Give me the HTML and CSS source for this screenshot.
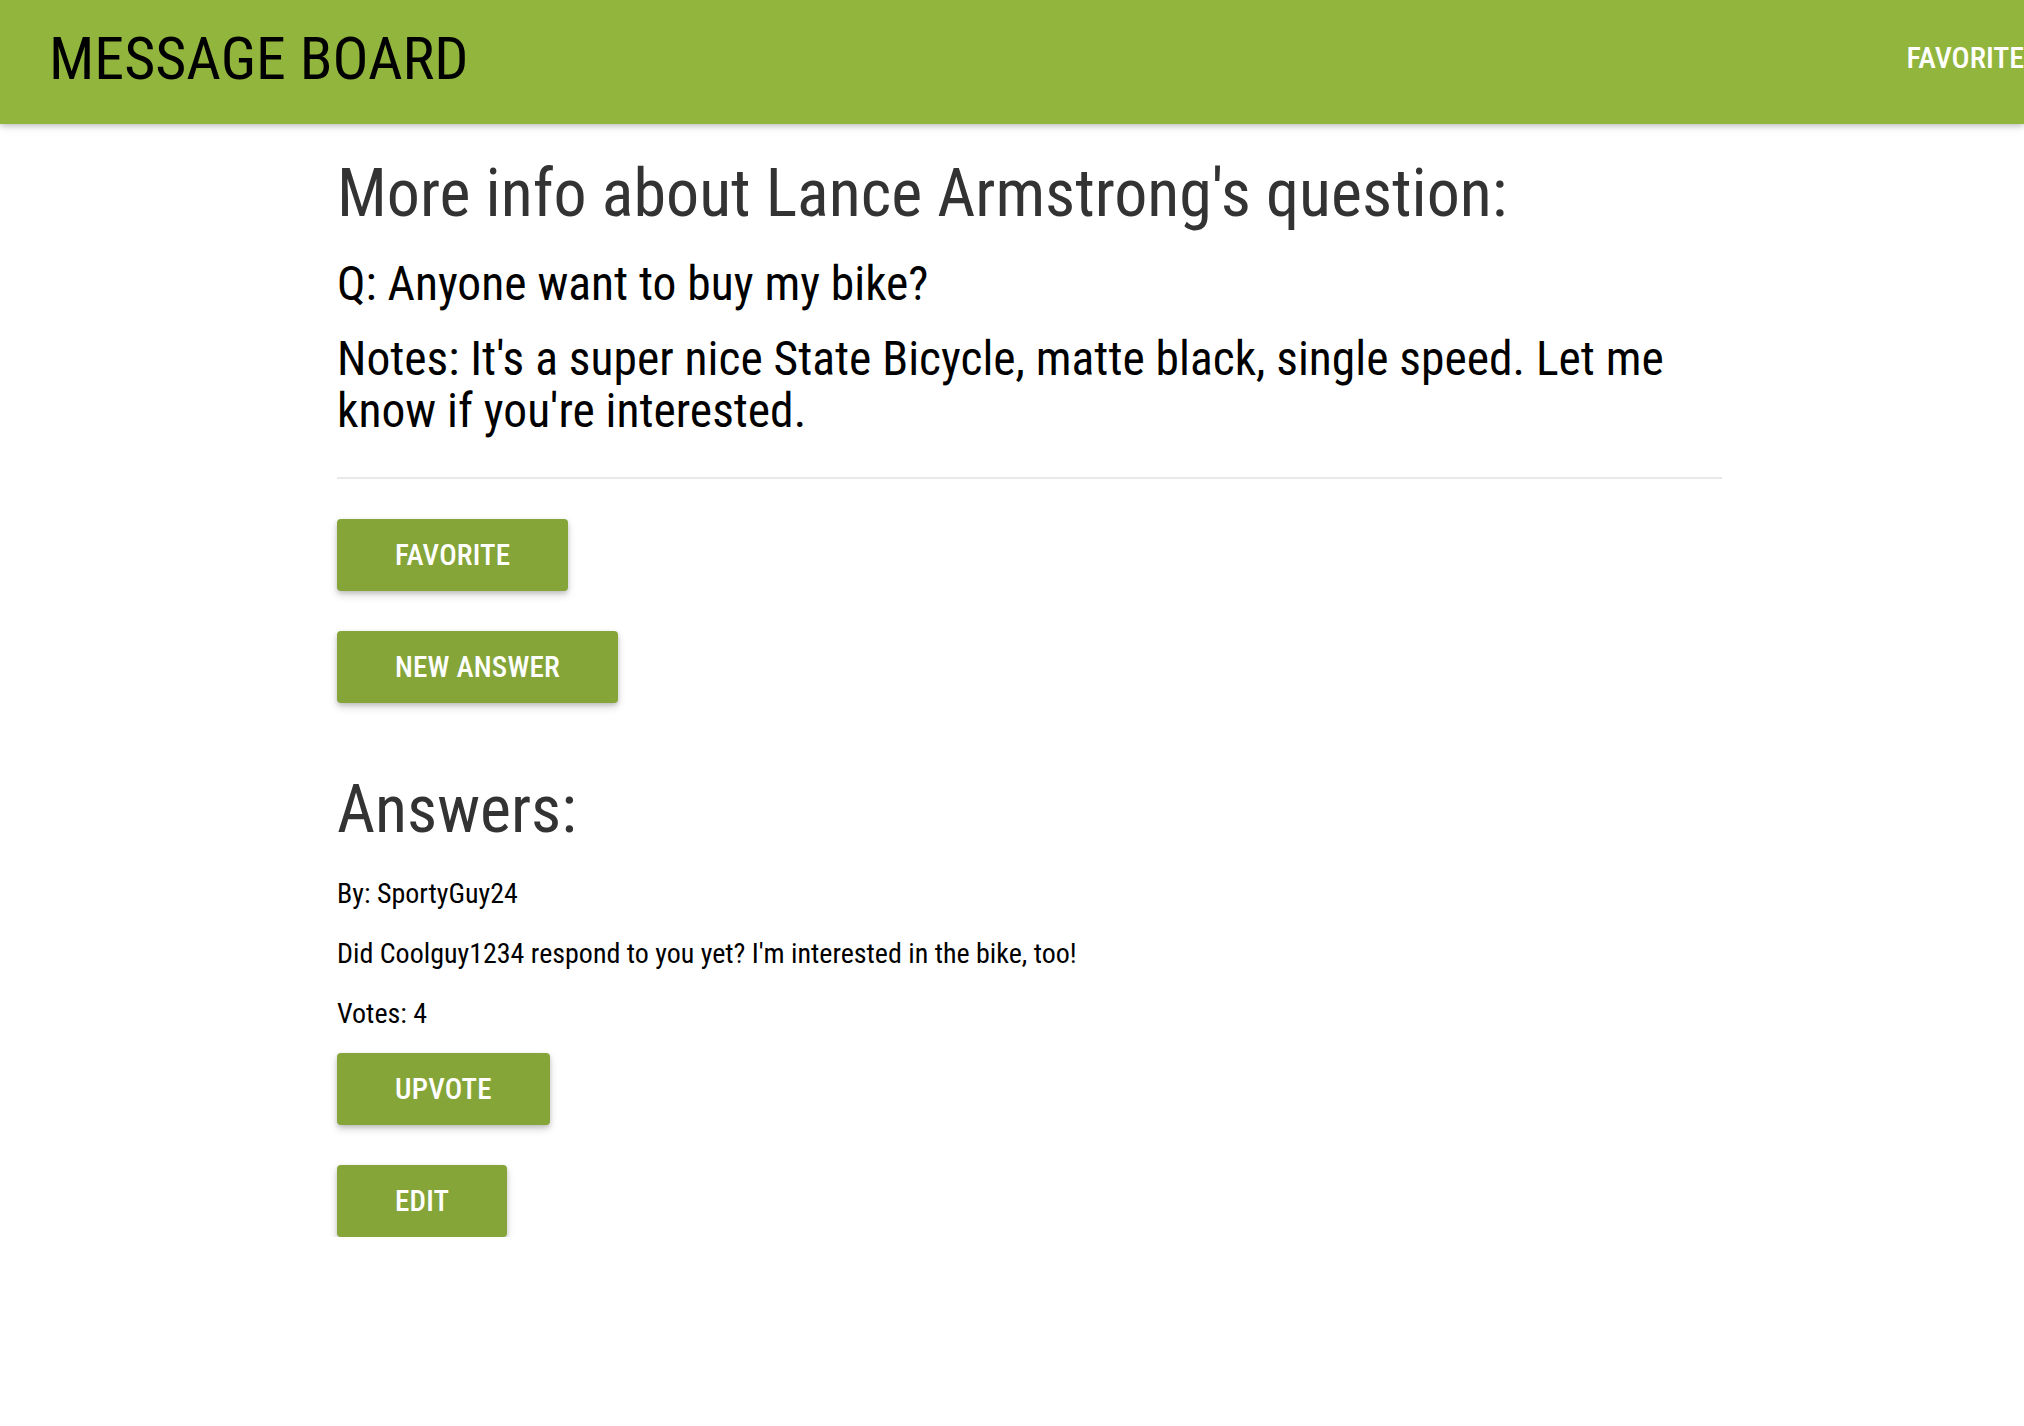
FILE: index.html
```html
<!DOCTYPE html>
<html lang="en">
<head>
<meta charset="utf-8">
<title>Message Board</title>
<link rel="stylesheet" href="styles.css">
</head>
<body>
<header class="topbar">
  <a class="brand" href="#">MESSAGE BOARD</a>
  <nav class="nav-links">
    <a class="nav-link" href="#">FAVORITES</a>
  </nav>
</header>
<main class="container">
  <h1 class="page-title">More info about Lance Armstrong's question:</h1>
  <h2 class="question">Q: Anyone want to buy my bike?</h2>
  <h2 class="notes">Notes: It's a super nice State Bicycle, matte black, single speed. Let me know if you're interested.</h2>
  <hr class="divider">
  <div class="actions">
    <button class="btn">FAVORITE</button>
    <button class="btn">NEW ANSWER</button>
  </div>
  <h1 class="answers-title">Answers:</h1>
  <section class="answer">
    <p class="answer-line">By: SportyGuy24</p>
    <p class="answer-line">Did Coolguy1234 respond to you yet? I'm interested in the bike, too!</p>
    <p class="answer-line">Votes: 4</p>
    <div class="actions actions-answer">
      <button class="btn">UPVOTE</button>
      <button class="btn">EDIT</button>
    </div>
  </section>
</main>
</body>
</html>
```
FILE: styles.css
```css
html, body {
  margin: 0;
  padding: 0;
  background: #ffffff;
  overflow-x: hidden;
}

body {
  font-family: "Roboto Condensed", "Liberation Sans Narrow", "Roboto", "Liberation Sans", sans-serif;
  color: #000;
}

.topbar {
  height: 124px;
  background: #92b53d;
  display: flex;
  align-items: flex-start;
  overflow: hidden;
  box-shadow: 0 2px 5px rgba(0, 0, 0, 0.16), 0 2px 10px rgba(0, 0, 0, 0.12);
  position: relative;
  z-index: 1;
}

.brand {
  padding-left: 49px;
  font-size: 60px;
  line-height: 117px;
  color: #000;
  text-decoration: none;
  white-space: nowrap;
}

.nav-links {
  margin-left: auto;
  margin-right: -46px;
  display: flex;
}

.nav-link {
  display: block;
  font-size: 30px;
  font-weight: 500;
  line-height: 116px;
  color: #fff;
  text-decoration: none;
  padding: 0 30px;
  white-space: nowrap;
}

.container {
  width: 1420px;
  margin: 0 auto;
  padding-left: 35px;
  box-sizing: border-box;
}

.page-title,
.answers-title {
  font-size: 66px;
  font-weight: 400;
  line-height: 1.1;
  color: #333;
  margin: 0;
}

.page-title {
  margin-top: 34px;
}

.question,
.notes {
  font-size: 47.5px;
  font-weight: 400;
  line-height: 1.1;
  color: #000;
  margin: 0;
}

.question {
  margin-top: 27px;
}

.notes {
  margin-top: 23px;
}

.divider {
  border: 0;
  border-top: 2px solid #e9e9e9;
  margin: 40px 0 40px;
  height: 0;
}

.actions {
  display: flex;
  flex-direction: column;
  align-items: flex-start;
  gap: 40px;
}

.btn {
  height: 72px;
  padding: 0 58px;
  border: 0;
  border-radius: 4px;
  background: #85a538;
  color: #fff;
  font-family: inherit;
  font-size: 29px;
  font-weight: 500;
  letter-spacing: 0.2px;
  box-shadow: 0 4px 8px rgba(0, 0, 0, 0.16), 0 2px 4px rgba(0, 0, 0, 0.14);
  cursor: pointer;
}

.answers-title {
  margin-top: 71px;
}

.answer {
  margin-top: 26px;
}

.answer-line {
  font-size: 28px;
  line-height: 42px;
  margin: 0 0 18px;
  color: #000;
}

.actions-answer {
  margin-top: 1px;
}
```
